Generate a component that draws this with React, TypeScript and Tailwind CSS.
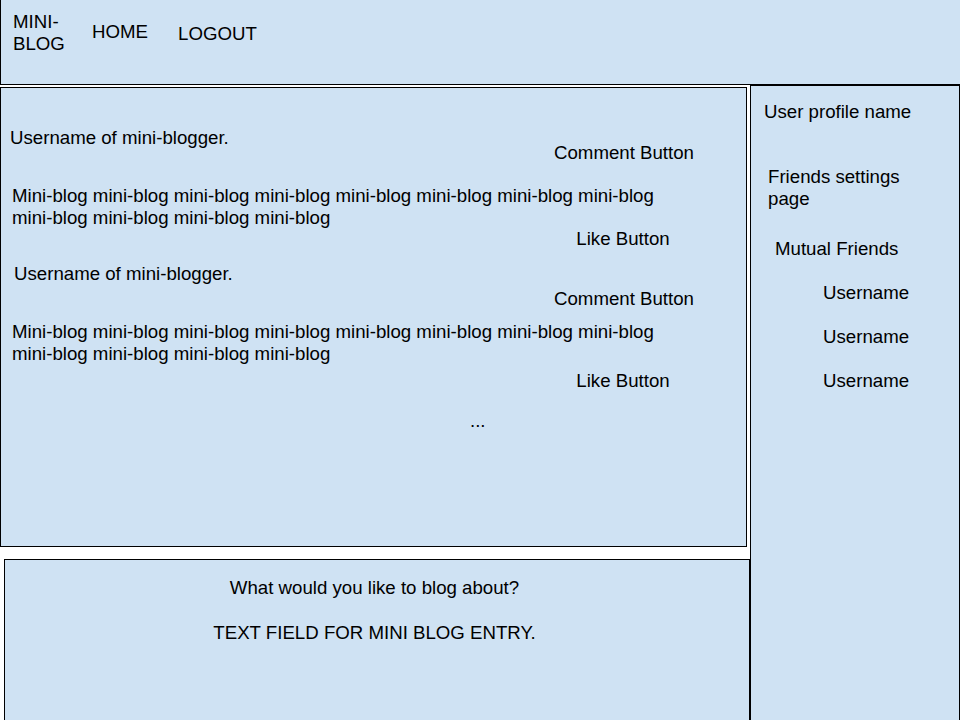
const posts = [
  { user: "Username of mini-blogger.", pad: "pl-[9px]", top: "mt-[39px]", commentTop: "mt-[15px]", bodyTop: "mt-[21px]", likeTop: "-mt-[1px]" },
  { user: "Username of mini-blogger.", pad: "pl-[13px]", top: "mt-[13px]", commentTop: "mt-[25px]", bodyTop: "mt-[11px]", likeTop: "mt-[5px]" },
]

const friends = ["Username", "Username", "Username"]

const App = () => {
  return (
    <div className="w-[960px] h-[720px] overflow-hidden bg-white text-black text-[18.67px] leading-[22px] font-['Liberation_Sans',Arial,sans-serif]">
      {/* top bar */}
      <div className="flex items-start h-[85px] border-l border-b border-black bg-[#cfe2f3]">
        <div className="w-[91px] pl-[12px] pt-[11px]">
          MINI-
          <br />
          BLOG
        </div>
        <div className="w-[86px] pt-[21px]">HOME</div>
        <div className="pt-[23px]">LOGOUT</div>
      </div>

      <div className="flex">
        <div className="w-[750px] flex flex-col">
          {/* feed */}
          <div className="mt-[2px] w-[747px] h-[460px] border border-black bg-[#cfe2f3] flex flex-col">
            {posts.map((p, i) => (
              <div key={i} className="flex flex-col">
                <div className={`flex ${p.top}`}>
                  <div className={`w-[543px] ${p.pad}`}>{p.user}</div>
                  <div className={`w-[160px] text-center ${p.commentTop}`}>Comment Button</div>
                </div>
                <div className={`w-[680px] pl-[11px] ${p.bodyTop}`}>
                  Mini-blog mini-blog mini-blog mini-blog mini-blog mini-blog mini-blog mini-blog mini-blog mini-blog mini-blog mini-blog
                </div>
                <div className={`ml-[542px] w-[160px] text-center ${p.likeTop}`}>Like Button</div>
              </div>
            ))}
            <div className="mt-[18px] pl-[469px]">...</div>
          </div>

          {/* composer */}
          <div className="mt-[12px] ml-[4px] w-[746px] h-[200px] border-l border-t border-r border-black bg-[#cfe2f3] flex flex-col items-center pr-[5px]">
            <div className="mt-[17px]">What would you like to blog about?</div>
            <div className="mt-[23px]">TEXT FIELD FOR MINI BLOG ENTRY.</div>
          </div>
        </div>

        {/* sidebar */}
        <div className="w-[210px] h-[660px] border-l border-t border-r border-black bg-[#cfe2f3] flex flex-col">
          <div className="mt-[15px] pl-[13px]">User profile name</div>
          <div className="mt-[43px] pl-[17px]">
            Friends settings
            <br />
            page
          </div>
          <div className="mt-[28px] pl-[24px]">Mutual Friends</div>
          {friends.map((f, i) => (
            <div key={i} className="mt-[22px] pl-[72px]">
              {f}
            </div>
          ))}
        </div>
      </div>
    </div>
  )
}

export default App
